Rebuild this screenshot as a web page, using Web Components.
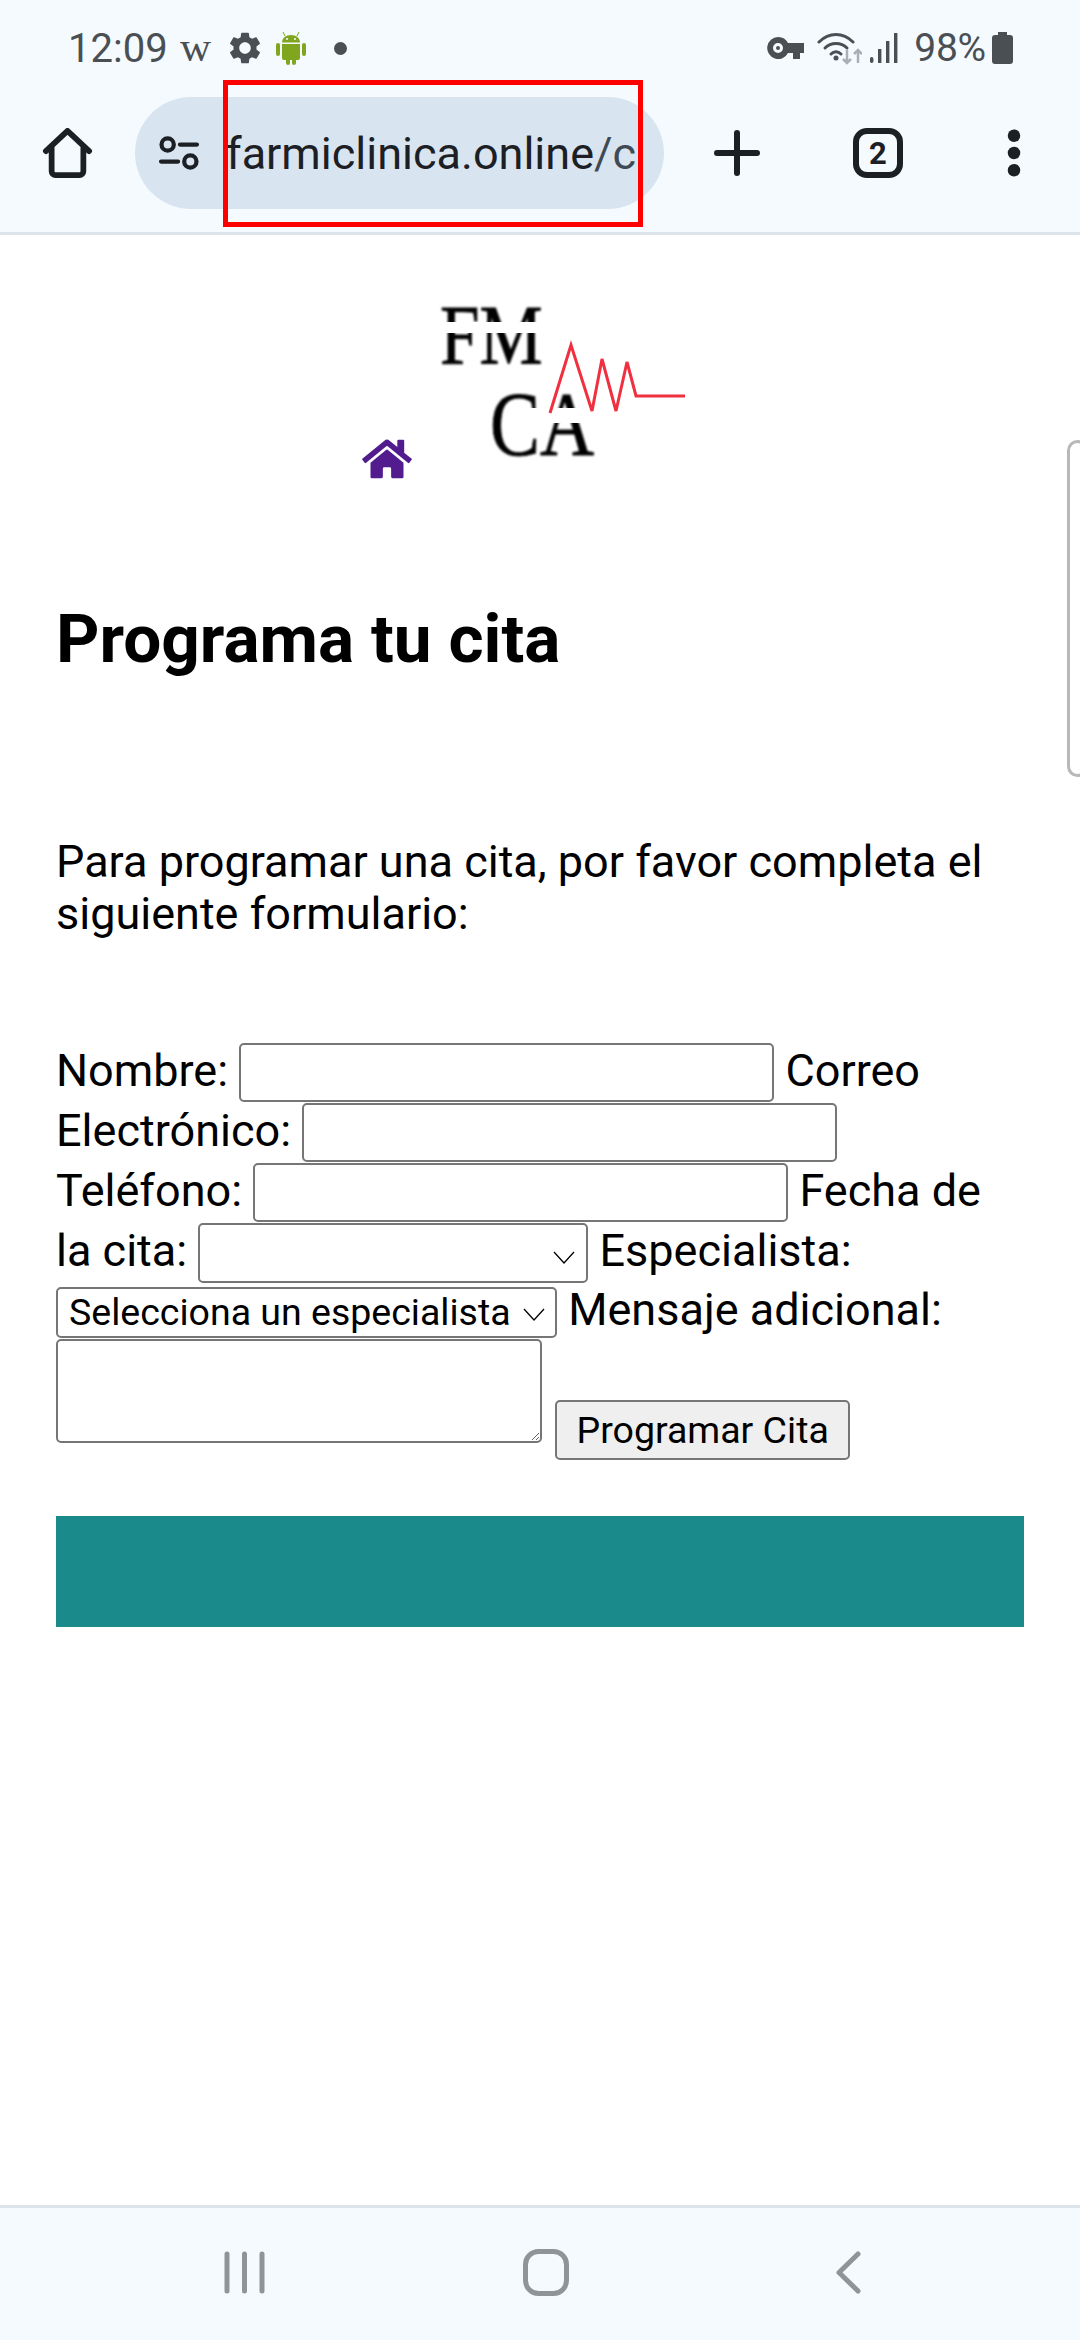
<!DOCTYPE html>
<html lang="es">
<head>
<meta charset="utf-8">
<title>Programa tu cita</title>
<style>
  html, body { margin: 0; padding: 0; background: #fff; }
  body { font-family: Roboto, "Liberation Sans", sans-serif; }
</style>
</head>
<body>
<phone-shell>
  <status-bar slot="top"></status-bar>
  <browser-toolbar slot="top" url="farmiclinica.online" path="/c"></browser-toolbar>
  <page-logo></page-logo>
  <page-intro heading="Programa tu cita">Para programar una cita, por favor completa el siguiente formulario:</page-intro>
  <cita-form></cita-form>
  <teal-footer></teal-footer>
  <nav-bar slot="bottom"></nav-bar>
</phone-shell>

<script>
const shellTemplate = document.createElement('template');
shellTemplate.innerHTML = `
  <style>
    :host { display: flex; flex-direction: column; width: 1080px; height: 2340px; overflow: hidden; position: relative; background: #fff; color: #000; }
    main { flex: 1; min-height: 0; padding: 0 56px; }
    .edge {
      position: absolute; right: -8px; top: 440px; width: 21px; height: 337px;
      border: 3px solid #b8b8b8; border-radius: 12px; box-sizing: border-box;
    }
    .mark {
      position: absolute; left: 223px; top: 80px; width: 420px; height: 147px;
      border: 5px solid #ff0000; box-sizing: border-box;
    }
  </style>
  <slot name="top"></slot>
  <main><slot></slot></main>
  <slot name="bottom"></slot>
  <div class="edge"></div>
  <div class="mark"></div>
`;

class PhoneShell extends HTMLElement {
  constructor() {
    super();
    this.attachShadow({ mode: 'open' }).appendChild(shellTemplate.content.cloneNode(true));
  }
}

const statusTemplate = document.createElement('template');
statusTemplate.innerHTML = `
  <style>
    :host { display: flex; align-items: center; height: 78px; padding: 18px 67px 0 68px; box-sizing: border-box; background: #f5faff; color: #4a4f54; font-family: Roboto, sans-serif; font-size: 39px; }
    .time { width: 112px; font-size: 40px; }
    .w { width: 49px; margin-top: -4px; font-family: "Liberation Serif", serif; font-size: 43px; line-height: 1; }
    svg { display: block; flex: none; fill: #4a4f54; }
    .gear { margin-right: 15px; }
    .droid { margin-right: 28px; }
    .spacer { flex: 1; }
    .wifi { margin-left: 13px; }
    .bars { margin-left: 8px; }
    .pct { margin: 0 6px 0 16px; letter-spacing: -0.2px; }
  </style>
  <span class="time">12:09</span>
  <span class="w">w</span>
  <svg class="gear" width="32" height="32" viewBox="2 2 20 20"><path d="M19.14 12.94c.04-.3.06-.61.06-.94 0-.32-.02-.64-.07-.94l2.03-1.58a.49.49 0 0 0 .12-.61l-1.92-3.32a.488.488 0 0 0-.59-.22l-2.39.96c-.5-.38-1.03-.7-1.62-.94l-.36-2.54a.484.484 0 0 0-.48-.41h-3.84c-.24 0-.43.17-.47.41l-.36 2.54c-.59.24-1.13.57-1.62.94l-2.39-.96c-.22-.08-.47 0-.59.22L2.74 8.87c-.12.21-.08.47.12.61l2.03 1.58c-.05.3-.09.63-.09.94s.02.64.07.94l-2.03 1.58a.49.49 0 0 0-.12.61l1.92 3.32c.12.22.37.29.59.22l2.39-.96c.5.38 1.03.7 1.62.94l.36 2.54c.05.24.24.41.48.41h3.84c.24 0 .44-.17.47-.41l.36-2.54c.59-.24 1.13-.56 1.62-.94l2.39.96c.22.08.47 0 .59-.22l1.92-3.32c.12-.22.07-.47-.12-.61l-2.01-1.58zM12 15.6c-1.98 0-3.6-1.62-3.6-3.6s1.62-3.6 3.6-3.6 3.6 1.62 3.6 3.6-1.62 3.6-3.6 3.6z"/></svg>
  <svg class="droid" width="30" height="34" viewBox="0 0 30 34" style="fill:#7fa61e">
    <path d="M6 11.5C6 7 10 4 15 4s9 3 9 7.5z"/>
    <path d="M9 5 7 1M21 5l2-4" stroke="#7fa61e" stroke-width="1" fill="none"/>
    <path d="M6 13h18v14a2 2 0 0 1-2 2h-2v3a2 2 0 0 1-4 0v-3h-2v3a2 2 0 0 1-4 0v-3H8a2 2 0 0 1-2-2z"/>
    <rect x="0" y="12" width="4" height="13" rx="2"/><rect x="26" y="12" width="4" height="13" rx="2"/>
    <circle cx="11" cy="8" r="1" fill="#f5faff"/><circle cx="19" cy="8" r="1" fill="#f5faff"/>
  </svg>
  <svg width="13" height="13" viewBox="0 0 12 12"><circle cx="6" cy="6" r="6"/></svg>
  <span class="spacer"></span>
  <svg width="37" height="24" viewBox="0 0 37 24"><path fill-rule="evenodd" d="M11 1a11 11 0 0 1 10 6h16v10h-4v6h-7v-6h-5a11 11 0 1 1-10-16zm0 6a5 5 0 1 0 0 10 5 5 0 0 0 0-10zm0 3a2 2 0 1 1 0 4 2 2 0 0 1 0-4z"/></svg>
  <svg class="wifi" width="45" height="34" viewBox="0 0 45 34">
    <g fill="none" stroke="#4a4f54" stroke-width="3" stroke-linecap="round">
      <path d="M2 11C12 1 26 1 36 11"/><path d="M8 17c6-6 16-6 22 0"/><path d="M14 23c3-3 7-3 10 0"/>
    </g>
    <circle cx="19" cy="27" r="2.5"/>
    <g fill="none" stroke="#a9afb5" stroke-width="2.5"><path d="M30 19v13M26 28l4 4 4-4"/><path d="M41 32V19M37 23l4-4 4 4"/></g>
  </svg>
  <svg class="bars" width="28" height="30" viewBox="0 0 28 30"><rect x="0" y="24" width="3.4" height="6" rx="1.7"/><rect x="8" y="16" width="3.4" height="14"/><rect x="16" y="8" width="3.4" height="22"/><rect x="24" y="0" width="3.4" height="30"/></svg>
  <span class="pct">98%</span>
  <svg width="21" height="32" viewBox="0 0 21 32"><path d="M6 0h9v3h3a3 3 0 0 1 3 3v23a3 3 0 0 1-3 3H3a3 3 0 0 1-3-3V6a3 3 0 0 1 3-3h3z"/></svg>
`;

class StatusBar extends HTMLElement {
  constructor() {
    super();
    this.attachShadow({ mode: 'open' }).appendChild(statusTemplate.content.cloneNode(true));
  }
}

const toolbarTemplate = document.createElement('template');
toolbarTemplate.innerHTML = `
  <style>
    :host { display: flex; align-items: center; height: 157px; padding: 0 0 4px 42px; box-sizing: border-box; background: #f5faff; border-bottom: 3px solid #dde5ea; color: #1c2025; font-family: Roboto, sans-serif; }
    svg { display: block; flex: none; }
    .pill { display: flex; align-items: center; width: 529px; height: 112px; margin-left: 42px; padding-left: 23px; box-sizing: border-box; border-radius: 56px; background: #d8e5f1; }
    .url { margin-left: 26px; white-space: nowrap; font-size: 45px; }
    .url span + span { color: #3f4a54; }
    .plus { margin-left: 50px; }
    .tabs { margin-left: 93px; width: 50px; height: 50px; border: 6px solid #1c2025; border-radius: 14px; box-sizing: border-box; display: flex; align-items: center; justify-content: center; font-size: 31px; font-weight: 700; }
    .more { margin-left: 103px; }
  </style>
  <svg width="51" height="50" viewBox="0 0 51 52" fill="none" stroke="#1c2025" stroke-width="6" stroke-linejoin="round" stroke-linecap="round"><path d="M3 24 25.5 3 48 24M9 20v25a4 4 0 0 0 4 4h25a4 4 0 0 0 4-4V20"/></svg>
  <div class="pill">
    <svg width="42" height="34" viewBox="0 0 42 36" fill="none" stroke="#1c2025" stroke-width="4.5" stroke-linecap="round"><circle cx="9" cy="9" r="6.5"/><path d="M22 9h18M2 27h18"/><circle cx="33" cy="27" r="6.5"/></svg>
    <div class="url"><span id="host"></span><span id="path"></span></div>
  </div>
  <svg class="plus" width="46" height="46" viewBox="0 0 46 46" stroke="#1c2025" stroke-width="6" stroke-linecap="round"><path d="M23 3v40M3 23h40"/></svg>
  <div class="tabs">2</div>
  <svg class="more" width="16" height="48" viewBox="0 0 16 50" fill="#1c2025"><circle cx="8" cy="7" r="6.5"/><circle cx="8" cy="25" r="6.5"/><circle cx="8" cy="43" r="6.5"/></svg>
`;

class BrowserToolbar extends HTMLElement {
  constructor() {
    super();
    this.attachShadow({ mode: 'open' }).appendChild(toolbarTemplate.content.cloneNode(true));
    this.shadowRoot.querySelector('#host').textContent = this.getAttribute('url');
    this.shadowRoot.querySelector('#path').textContent = this.getAttribute('path');
  }
}

const logoTemplate = document.createElement('template');
logoTemplate.innerHTML = `
  <style>
    :host { display: block; position: relative; height: 260px; margin: 0 -56px; }
    .word { position: absolute; font-family: "Liberation Serif", serif; color: #000; line-height: 1; white-space: nowrap; transform-origin: 0 0; filter: blur(0.8px); -webkit-text-stroke: 0.7px #000; }
    .fm { left: 440px; top: 58px; font-size: 71px; transform: scaleY(1.2); }
    .ca { left: 490px; top: 144px; font-size: 75px; transform: scaleY(1.2); }
    .cut { position: absolute; background: #fff; }
    .cut1 { left: 436px; top: 87px; width: 112px; height: 11px; }
    .cut2 { left: 515px; top: 173px; width: 84px; height: 15px; }
    svg { position: absolute; display: block; }
    .beat { left: 0; top: 5px; }
    .home { left: 362px; top: 202px; }
  </style>
  <span class="word fm">FM</span>
  <span class="word ca">CA</span>
  <div class="cut cut1"></div>
  <div class="cut cut2"></div>
  <svg class="beat" width="700" height="200" viewBox="0 240 700 200" fill="none" stroke="#f0303f" stroke-width="3"><polyline points="550,413 571,345 592,411 602,359 616,411 627,362 636,396 685,396"/></svg>
  <svg class="home" width="50" height="44" viewBox="0 0 576 512" fill="#521c8f"><path d="M280.37 148.26L96 300.11V464a16 16 0 0 0 16 16l112.06-.29a16 16 0 0 0 15.92-16V368a16 16 0 0 1 16-16h64a16 16 0 0 1 16 16v95.64a16 16 0 0 0 16 16.05L464 480a16 16 0 0 0 16-16V300L295.67 148.26a12.19 12.19 0 0 0-15.3 0zM571.6 251.47L488 182.56V44.05a12 12 0 0 0-12-12h-56a12 12 0 0 0-12 12v72.61L318.47 43a48 48 0 0 0-61 0L4.34 251.47a12 12 0 0 0-1.6 16.9l25.5 31A12 12 0 0 0 45.15 301l235.22-193.74a12.19 12.19 0 0 1 15.3 0L530.9 301a12 12 0 0 0 16.9-1.6l25.5-31a12 12 0 0 0-1.7-16.93z"/></svg>
`;

class PageLogo extends HTMLElement {
  constructor() {
    super();
    this.attachShadow({ mode: 'open' }).appendChild(logoTemplate.content.cloneNode(true));
  }
}

const introTemplate = document.createElement('template');
introTemplate.innerHTML = `
  <style>
    :host { display: block; font-family: Roboto, sans-serif; }
    h1 { margin: 106px 0 0; font-size: 67.5px; line-height: 75px; font-weight: 700; }
    p { margin: 160px 0 0; font-size: 45px; line-height: 52px; }
  </style>
  <h1></h1>
  <p><slot></slot></p>
`;

class PageIntro extends HTMLElement {
  constructor() {
    super();
    this.attachShadow({ mode: 'open' }).appendChild(introTemplate.content.cloneNode(true));
    this.shadowRoot.querySelector('h1').textContent = this.getAttribute('heading');
  }
}

const chevron = "url(\"data:image/svg+xml,%3Csvg xmlns='http://www.w3.org/2000/svg' width='22' height='14'%3E%3Cpath d='M1 1l10 11L21 1' fill='none' stroke='%23000' stroke-width='1.3'/%3E%3C/svg%3E\")";

const formTemplate = document.createElement('template');
formTemplate.innerHTML = `
  <style>
    :host { display: block; margin-top: 103px; font-family: Roboto, sans-serif; font-size: 45px; line-height: 52px; }
    form { margin: 0; }
    input, select, textarea, button {
      font-family: Roboto, sans-serif; font-size: 37.5px; box-sizing: border-box; margin: 0;
      border: 2px solid #767676; border-radius: 5px; background-color: #fff; color: #000; padding: 0 4px;
    }
    input { width: 535px; height: 59px; margin-bottom: 1px; }
    select { -webkit-appearance: none; appearance: none; background-image: ${chevron}; background-repeat: no-repeat; background-size: 22px 14px; }
    .date { width: 390px; height: 60px; margin-bottom: 1px; background-position: 353px 26px; }
    .who { width: 501px; height: 51px; margin-bottom: 1px; padding-left: 11px; background-position: 465px 19px; }
    textarea { width: 486px; height: 104px; }
    button { height: 60px; width: 295px; background: #efefef; padding: 0; margin-left: 2px; }
  </style>
  <form>
    <label>Nombre: <input type="text"></label> <label><span>Correo</span> <span>Electrónico:</span> <input type="email"></label> <label>Teléfono: <input type="tel"></label> <label><span>Fecha de</span> <span>la cita:</span> <select class="date"><option></option></select></label> <label>Especialista: <select class="who"><option>Selecciona un especialista</option></select></label> <label>Mensaje adicional: <textarea></textarea></label> <button type="button">Programar Cita</button>
  </form>
`;

class CitaForm extends HTMLElement {
  constructor() {
    super();
    this.attachShadow({ mode: 'open' }).appendChild(formTemplate.content.cloneNode(true));
  }
}

class TealFooter extends HTMLElement {
  constructor() {
    super();
    this.attachShadow({ mode: 'open' }).innerHTML = `
      <style>:host { display: block; height: 111px; margin-top: 56px; background: #1a8a8a; }</style>
    `;
  }
}

const navTemplate = document.createElement('template');
navTemplate.innerHTML = `
  <style>
    :host { display: flex; align-items: center; height: 135px; padding: 0 0 4px 224px; box-sizing: border-box; background: #f5faff; border-top: 3px solid #dde5ea; }
    svg { display: block; flex: none; }
    .home { margin-left: 258px; }
    .back { margin-left: 267px; }
  </style>
  <svg width="41" height="43" viewBox="0 0 41 43" stroke="#909498" stroke-width="5" stroke-linecap="round"><path d="M3 3v37M20.500 3v37M38 3v37"/></svg>
  <svg class="home" width="46" height="47" viewBox="0 0 46 47" fill="none" stroke="#909498" stroke-width="5"><rect x="2.500" y="2.500" width="41" height="42" rx="13"/></svg>
  <svg class="back" width="25" height="43" viewBox="0 0 25 43" fill="none" stroke="#909498" stroke-width="5" stroke-linecap="round" stroke-linejoin="round"><path d="M22 3 3 21.500 22 40"/></svg>
`;

class NavBar extends HTMLElement {
  constructor() {
    super();
    this.attachShadow({ mode: 'open' }).appendChild(navTemplate.content.cloneNode(true));
  }
}

customElements.define('phone-shell', PhoneShell);
customElements.define('status-bar', StatusBar);
customElements.define('browser-toolbar', BrowserToolbar);
customElements.define('page-logo', PageLogo);
customElements.define('page-intro', PageIntro);
customElements.define('cita-form', CitaForm);
customElements.define('teal-footer', TealFooter);
customElements.define('nav-bar', NavBar);
</script>
</body>
</html>
